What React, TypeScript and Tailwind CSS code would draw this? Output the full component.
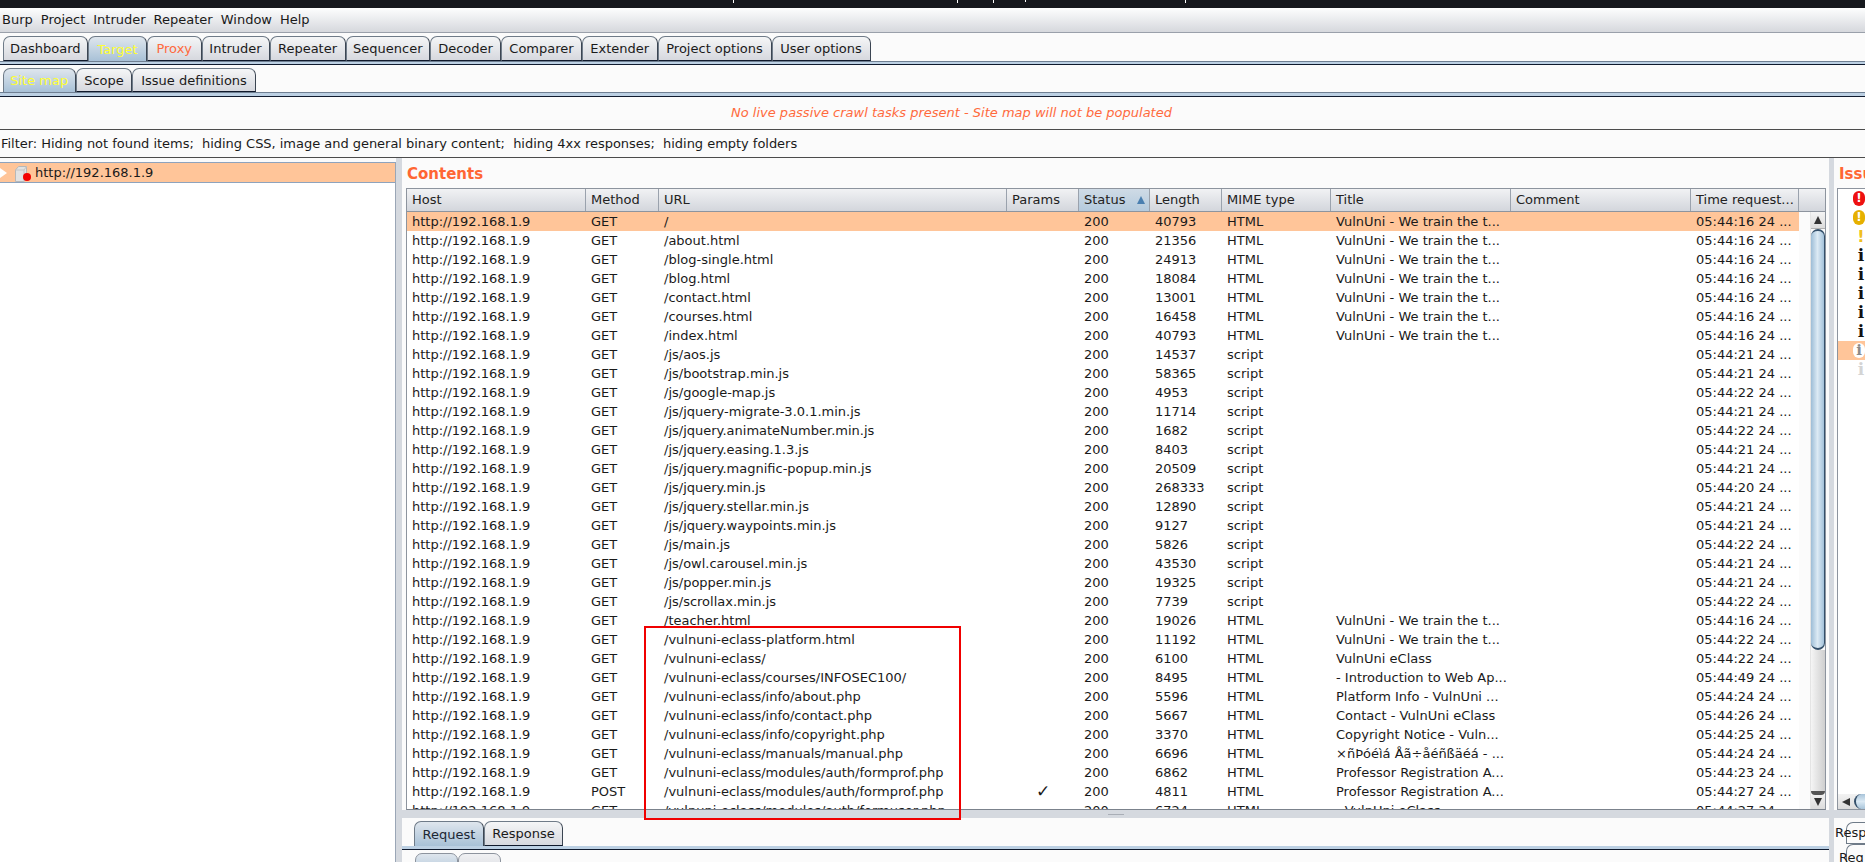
const GRID = "grid grid-cols-[179px_73px_348px_72px_71px_72px_109px_180px_180px_108px]";
const VU = "VulnUni - We train the t...";
type Row = [string, string, string, string, string, string, string];
const rows: Row[] = [
  ["GET", "/", "40793", "HTML", VU, "05:44:16 24 ...", ""],
  ["GET", "/about.html", "21356", "HTML", VU, "05:44:16 24 ...", ""],
  ["GET", "/blog-single.html", "24913", "HTML", VU, "05:44:16 24 ...", ""],
  ["GET", "/blog.html", "18084", "HTML", VU, "05:44:16 24 ...", ""],
  ["GET", "/contact.html", "13001", "HTML", VU, "05:44:16 24 ...", ""],
  ["GET", "/courses.html", "16458", "HTML", VU, "05:44:16 24 ...", ""],
  ["GET", "/index.html", "40793", "HTML", VU, "05:44:16 24 ...", ""],
  ["GET", "/js/aos.js", "14537", "script", "", "05:44:21 24 ...", ""],
  ["GET", "/js/bootstrap.min.js", "58365", "script", "", "05:44:21 24 ...", ""],
  ["GET", "/js/google-map.js", "4953", "script", "", "05:44:22 24 ...", ""],
  ["GET", "/js/jquery-migrate-3.0.1.min.js", "11714", "script", "", "05:44:21 24 ...", ""],
  ["GET", "/js/jquery.animateNumber.min.js", "1682", "script", "", "05:44:22 24 ...", ""],
  ["GET", "/js/jquery.easing.1.3.js", "8403", "script", "", "05:44:21 24 ...", ""],
  ["GET", "/js/jquery.magnific-popup.min.js", "20509", "script", "", "05:44:21 24 ...", ""],
  ["GET", "/js/jquery.min.js", "268333", "script", "", "05:44:20 24 ...", ""],
  ["GET", "/js/jquery.stellar.min.js", "12890", "script", "", "05:44:21 24 ...", ""],
  ["GET", "/js/jquery.waypoints.min.js", "9127", "script", "", "05:44:21 24 ...", ""],
  ["GET", "/js/main.js", "5826", "script", "", "05:44:22 24 ...", ""],
  ["GET", "/js/owl.carousel.min.js", "43530", "script", "", "05:44:21 24 ...", ""],
  ["GET", "/js/popper.min.js", "19325", "script", "", "05:44:21 24 ...", ""],
  ["GET", "/js/scrollax.min.js", "7739", "script", "", "05:44:22 24 ...", ""],
  ["GET", "/teacher.html", "19026", "HTML", VU, "05:44:16 24 ...", ""],
  ["GET", "/vulnuni-eclass-platform.html", "11192", "HTML", VU, "05:44:22 24 ...", ""],
  ["GET", "/vulnuni-eclass/", "6100", "HTML", "VulnUni eClass", "05:44:22 24 ...", ""],
  ["GET", "/vulnuni-eclass/courses/INFOSEC100/", "8495", "HTML", "- Introduction to Web Ap...", "05:44:49 24 ...", ""],
  ["GET", "/vulnuni-eclass/info/about.php", "5596", "HTML", "Platform Info - VulnUni ...", "05:44:24 24 ...", ""],
  ["GET", "/vulnuni-eclass/info/contact.php", "5667", "HTML", "Contact - VulnUni eClass", "05:44:26 24 ...", ""],
  ["GET", "/vulnuni-eclass/info/copyright.php", "3370", "HTML", "Copyright Notice - Vuln...", "05:44:25 24 ...", ""],
  ["GET", "/vulnuni-eclass/manuals/manual.php", "6696", "HTML", "×ñÞóéìá Åã÷åéñßäéá - ...", "05:44:24 24 ...", ""],
  ["GET", "/vulnuni-eclass/modules/auth/formprof.php", "6862", "HTML", "Professor Registration A...", "05:44:23 24 ...", ""],
  ["POST", "/vulnuni-eclass/modules/auth/formprof.php", "4811", "HTML", "Professor Registration A...", "05:44:27 24 ...", "✓"],
  ["GET", "/vulnuni-eclass/modules/auth/formuser.php", "6724", "HTML", "- VulnUni eClass", "05:44:27 24 ...", ""],
];

const mainTabs: [string, string, string][] = [
  ["Dashboard", "w-[85.5px]", ""],
  ["Target", "w-[59px]", "sel"],
  ["Proxy", "w-[54.5px]", "proxy"],
  ["Intruder", "w-[68px]", ""],
  ["Repeater", "w-[76px]", ""],
  ["Sequencer", "w-[84.5px]", ""],
  ["Decoder", "w-[71px]", ""],
  ["Comparer", "w-[81px]", ""],
  ["Extender", "w-[75.5px]", ""],
  ["Project options", "w-[114px]", ""],
  ["User options", "w-[99px]", ""],
];
const subTabs: [string, string, string][] = [
  ["Site map", "w-[73.5px]", "sel"],
  ["Scope", "w-[56px]", ""],
  ["Issue definitions", "w-[124px]", ""],
];

function Tab({ label, width, kind }: { label: string; width: string; kind: string }) {
  const base = "h-full flex items-center justify-center rounded-t-[7px] border border-[#6f7b88] border-b-[#10192b] border-r-[#3b4552] text-[13px] leading-none";
  if (kind === "sel")
    return <div className={`${base} ${width} border-b-0 bg-linear-to-b from-[#dfe6ed] to-[#a8c1d7] text-[#ffff33]`}>{label}</div>;
  if (kind === "dark")
    return <div className={`${base} ${width} border-b-0 bg-linear-to-b from-[#dfe6ed] to-[#a8c1d7] text-[#1c2733]`}>{label}</div>;
  const color = kind === "proxy" ? "text-[#ff6a3d]" : "text-[#1a1a1a]";
  return <div className={`${base} ${width} bg-linear-to-b from-[#f5f6f7] to-[#d6d8de] ${color}`}>{label}</div>;
}

function HeaderCell({ label, sorted }: { label: string; sorted?: boolean }) {
  return (
    <div
      className={`h-full flex items-center justify-between pl-[5px] pr-[3px] border-r border-[#9aa2ad] text-[13px] text-[#222] ${
        sorted ? "bg-linear-to-b from-[#cfdbe6] to-[#b4cadd]" : ""
      }`}
    >
      <span className="whitespace-nowrap">{label}</span>
      {sorted && (
        <svg width="8" height="8" viewBox="0 0 8 8" className="mr-[1px]">
          <path d="M4 0 L8 8 L0 8 Z" fill="#4a7fb0" />
        </svg>
      )}
    </div>
  );
}

function Cell({ children, center }: { children?: React.ReactNode; center?: boolean }) {
  return (
    <div className={`h-full overflow-hidden whitespace-nowrap flex items-center ${center ? "justify-center text-[17px] font-bold" : "pl-[5px]"}`}>{children}</div>
  );
}

function Arrow({ dir }: { dir: "up" | "down" | "left" }) {
  const d = dir === "up" ? "M5 1 L9 9 L1 9 Z" : dir === "down" ? "M1 1 L9 1 L5 9 Z" : "M1 5 L9 1 L9 9 Z";
  return (
    <svg width="10" height="10" viewBox="0 0 10 10">
      <path d={d} fill="#333" />
    </svg>
  );
}

function IssueRow({ kind }: { kind: string }) {
  const cls = "h-[19px] flex items-center justify-end";
  if (kind === "high")
    return (
      <div className={cls}>
        <div className="w-[12px] h-[15px] rounded-full bg-[#ee1111] text-white font-bold text-[12px] leading-[15px] text-center">!</div>
      </div>
    );
  if (kind === "med")
    return (
      <div className={cls}>
        <div className="w-[12px] h-[15px] rounded-full bg-[#e6b000] text-white font-bold text-[12px] leading-[15px] text-center">!</div>
      </div>
    );
  if (kind === "low")
    return (
      <div className={cls}>
        <span className="w-[8px] text-center text-[#f0c020] font-bold text-[16px] leading-none">!</span>
      </div>
    );
  if (kind === "sel")
    return (
      <div className={`${cls} bg-[#ffc599]`}>
        <div className="w-[12px] h-[15px] rounded-full bg-white text-[#8a8a8a] font-bold text-[15px] leading-[15px] text-center font-['DejaVu_Serif']">i</div>
      </div>
    );
  return (
    <div className={cls}>
      <span className={`w-[8px] text-center font-bold text-[17px] leading-none font-['DejaVu_Serif'] ${kind === "faint" ? "text-[#d4d4d4]" : "text-[#111]"}`}>i</span>
    </div>
  );
}

export default function App() {
  return (
    <div className="w-[1865px] h-[862px] overflow-hidden flex flex-col bg-[#fbfbfb] font-['DejaVu_Sans',sans-serif] text-[13px] text-[#1a1a1a]">
      {/* title bar */}
      <div className="relative h-[8px] shrink-0 bg-[#16181d]">
        <span className="absolute left-[733px] top-0 w-[1px] h-[3px] bg-white" />
        <span className="absolute left-[957px] top-0 w-[1px] h-[3px] bg-white" />
        <span className="absolute left-[993px] top-0 w-[1px] h-[3px] bg-white" />
        <span className="absolute left-[1025px] top-0 w-[1px] h-[2px] bg-white" />
        <span className="absolute left-[1185px] top-0 w-[1px] h-[3px] bg-white" />
      </div>
      {/* menu */}
      <div className="h-[25px] shrink-0 flex items-center gap-[8px] pl-[2px] bg-linear-to-b from-[#fdfefe] to-[#d6d8dd] border-b border-[#9aa0aa] text-[13px]">
        <span>Burp</span>
        <span>Project</span>
        <span>Intruder</span>
        <span>Repeater</span>
        <span>Window</span>
        <span>Help</span>
      </div>
      {/* main tabs */}
      <div className="h-[3px] shrink-0" />
      <div className="h-[25px] shrink-0 flex pl-[2.5px]">
        {mainTabs.map(([l, w, k]) => (
          <Tab key={l} label={l} width={w} kind={k} />
        ))}
      </div>
      <div className="h-[3px] shrink-0 bg-[#bcd0e3] border-t border-[#6f7f92]" />
      <div className="h-[1px] shrink-0 bg-[#0f1a2e]" />
      {/* sub tabs */}
      <div className="h-[3px] shrink-0" />
      <div className="h-[24px] shrink-0 flex pl-[2.5px]">
        {subTabs.map(([l, w, k]) => (
          <Tab key={l} label={l} width={w} kind={k} />
        ))}
      </div>
      <div className="h-[4px] shrink-0 bg-[#bcd0e3] border-t border-[#6f7f92]" />
      <div className="h-[1px] shrink-0 bg-[#0f1a2e]" />
      {/* message */}
      <div className="h-[33px] shrink-0 flex items-center justify-center pl-[38px] pb-[1px] italic text-[#ff6a3d] border-b border-[#4c4c4c] text-[13px]">
        No live passive crawl tasks present - Site map will not be populated
      </div>
      {/* filter */}
      <div className="h-[28px] shrink-0 flex items-center pl-[1px] border-b border-[#4c4c4c] whitespace-pre text-[13px] tracking-[-0.03px]">
        Filter: Hiding not found items;  hiding CSS, image and general binary content;  hiding 4xx responses;  hiding empty folders
      </div>
      {/* main split */}
      <div className="flex-1 min-h-0 flex">
        {/* tree */}
        <div className="w-[396px] shrink-0 pt-[4px]">
          <div className="h-full bg-white border-r border-[#9aa6b6] border-t border-t-[#8ea3bd]">
            <div className="h-[20px] bg-[#ffc599] border-b border-[#8ea3bd] flex items-center">
              <svg width="8" height="10" viewBox="0 0 8 10">
                <path d="M0 0 L7 5 L0 10 Z" fill="#ffffff" />
              </svg>
              <svg width="22" height="18" viewBox="0 0 22 18" className="ml-[7px]">
                <path d="M0.5 6 L3.5 2.5 L11.5 2.5 L11.5 14 L9 17.5 L0.5 17.5 Z" fill="#e2e2e2" stroke="#b8b8b8" />
                <path d="M0.5 6 L9 6 L9 17.5 M9 6 L11.5 2.5" fill="none" stroke="#c4c4c4" />
                <circle cx="12" cy="13" r="4" fill="#f30000" />
              </svg>
              <span className="ml-[-2px]">http://192.168.1.9</span>
            </div>
          </div>
        </div>
        {/* divider */}
        <div className="w-[6px] shrink-0 bg-[#d5d9df]" />
        {/* middle */}
        <div className="w-[1427px] shrink-0 flex flex-col">
          <div className="h-[30px] shrink-0 flex items-center pl-[5px] pt-[2px] font-bold text-[15px] text-[#ff6633]">Contents</div>
          <div className="ml-[4px] mr-[3px] h-[622px] shrink-0 border border-[#8d949e] border-b-[#7b828c] flex flex-col overflow-hidden bg-white">
            {/* header */}
            <div className="h-[23px] shrink-0 flex border-b border-[#8d949e] bg-linear-to-b from-[#f1f2f4] to-[#d3d6dc]">
              <div className={`${GRID} h-full`}>
                <HeaderCell label="Host" />
                <HeaderCell label="Method" />
                <HeaderCell label="URL" />
                <HeaderCell label="Params" />
                <HeaderCell label="Status" sorted />
                <HeaderCell label="Length" />
                <HeaderCell label="MIME type" />
                <HeaderCell label="Title" />
                <HeaderCell label="Comment" />
                <HeaderCell label="Time request..." />
              </div>
            </div>
            <div className="flex-1 min-h-0 flex">
              <div className="w-[1392px] shrink-0 overflow-hidden">
                {rows.map((r, i) => (
                  <div key={i} className={`${GRID} h-[19px] ${i === 0 ? "bg-[#ffc599]" : ""}`}>
                    <Cell>http://192.168.1.9</Cell>
                    <Cell>{r[0]}</Cell>
                    <Cell>{r[1]}</Cell>
                    <Cell center>{r[6]}</Cell>
                    <Cell>200</Cell>
                    <Cell>{r[2]}</Cell>
                    <Cell>{r[3]}</Cell>
                    <Cell>{r[4]}</Cell>
                    <Cell />
                    <Cell>{r[5]}</Cell>
                  </div>
                ))}
              </div>
              <div className="w-[11px] shrink-0 bg-[#fbfbfb]" />
              {/* scrollbar */}
              <div className="flex-1 flex flex-col bg-[#fafafa] border-l border-[#e4e4e4]">
                <div className="h-[17px] shrink-0 flex items-center justify-center border-b border-[#b0b0b0] bg-linear-to-b from-[#f4f4f4] to-[#dcdcdc]">
                  <Arrow dir="up" />
                </div>
                <div className="h-[421px] shrink-0 rounded-t-[8px] rounded-b-[8px] border-t-2 border-b-2 border-r border-[#35506a] bg-linear-to-r from-[#9dbdd6] via-[#dceaf4] to-[#a4c2da]" />
                <div className="flex-1 bg-linear-to-r from-[#f5f5f5] to-[#cfcfcf]" />
                <div className="h-[4px] shrink-0 bg-[#555] rounded-b-[6px]" />
                <div className="h-[14px] shrink-0 flex items-center justify-center bg-linear-to-b from-[#f0f0f0] to-[#dcdcdc]">
                  <Arrow dir="down" />
                </div>
              </div>
            </div>
          </div>
          {/* horizontal splitter */}
          <div className="h-[8px] shrink-0 bg-[#d5d9df] flex items-center justify-center">
            <div className="w-[16px] h-[1px] bg-[#a9aeb6]" />
          </div>
          {/* request / response */}
          <div className="h-[3px] shrink-0" />
          <div className="h-[25px] shrink-0 flex pl-[12px]">
            <Tab label="Request" width="w-[70px]" kind="dark" />
            <Tab label="Response" width="w-[79px]" kind="" />
          </div>
          <div className="h-[3px] shrink-0 bg-[#bcd0e3]" />
          <div className="h-[1px] shrink-0 bg-[#0f1a2e]" />
          <div className="h-[3px] shrink-0" />
          <div className="flex-1 min-h-0 flex pl-[13px]">
            <div className="w-[43px] h-[24px] rounded-t-[7px] border border-[#8d949e] bg-linear-to-b from-[#dfe6ed] to-[#a8c1d7] flex justify-center pt-[6px]">Raw</div>
            <div className="w-[43px] h-[24px] rounded-t-[7px] border border-[#8d949e] bg-linear-to-b from-[#f0f1f3] to-[#d6d8de] flex justify-center pt-[6px]">Hex</div>
          </div>
        </div>
        {/* divider */}
        <div className="w-[5px] shrink-0 bg-[#d5d9df]" />
        {/* issues */}
        <div className="flex-1 min-w-0 flex flex-col overflow-hidden">
          <div className="h-[30px] shrink-0 flex items-center pl-[5px] pt-[2px] font-bold text-[15px] text-[#ff6633] whitespace-nowrap">Issues</div>
          <div className="ml-[3px] h-[622px] shrink-0 border border-r-0 border-[#8d949e] bg-white flex flex-col">
            <IssueRow kind="high" />
            <IssueRow kind="med" />
            <IssueRow kind="low" />
            <IssueRow kind="info" />
            <IssueRow kind="info" />
            <IssueRow kind="info" />
            <IssueRow kind="info" />
            <IssueRow kind="info" />
            <IssueRow kind="sel" />
            <IssueRow kind="faint" />
            <div className="flex-1" />
            <div className="h-[15px] shrink-0 flex items-center bg-linear-to-b from-[#f2f2f2] to-[#dcdcdc]">
              <div className="w-[16px] flex justify-center">
                <Arrow dir="left" />
              </div>
              <div className="flex-1 h-full rounded-l-[8px] border-l-2 border-[#35506a] bg-linear-to-b from-[#a8c4da] via-[#dceaf4] to-[#a8c4da]" />
            </div>
          </div>
          <div className="h-[8px] shrink-0 bg-[#d5d9df]" />
          <div className="h-[4px] shrink-0" />
          <div className="h-[22px] shrink-0 ml-[12px] border border-r-0 border-[#6f7b88] rounded-tl-[7px] flex items-center">
            <span className="ml-[-12px]">Resp</span>
          </div>
          <div className="flex-1 ml-[12px] border-l border-t border-[#6f7b88] rounded-tl-[7px] flex items-start pt-[3px]">
            <span className="ml-[-8px]">Req</span>
          </div>
        </div>
      </div>
      {/* red highlight */}
      <div className="absolute left-[644px] top-[626px] w-[317px] h-[194px] border-2 border-[#f00000] pointer-events-none" />
    </div>
  );
}
